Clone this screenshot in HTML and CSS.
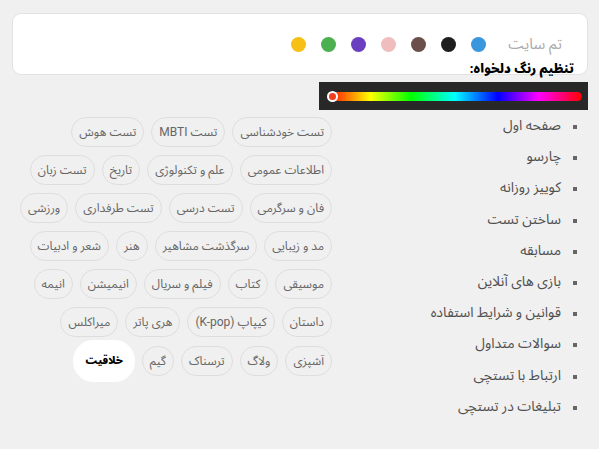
FILE: index.html
```html
<!DOCTYPE html>
<html lang="fa" dir="rtl">
<head>
    <meta charset="UTF-8">
    <meta name="viewport" content="width=device-width, initial-scale=1.0">
    <title>تنظیمات سایت</title>
    <link rel="stylesheet" href="styles.css">
</head>
<body>
    <div class="theme-card">
        <span class="theme-label">تم سایت</span>
        <span class="dot blue"></span>
        <span class="dot black"></span>
        <span class="dot brown"></span>
        <span class="dot pink"></span>
        <span class="dot purple"></span>
        <span class="dot green"></span>
        <span class="dot yellow"></span>
    </div>
    <h3 class="custom-title">تنظیم رنگ دلخواه:</h3>
    <div class="picker">
        <div class="hue-bar">
            <span class="thumb"></span>
        </div>
    </div>

    <div class="content">
        <ul class="menu">
            <li>صفحه اول</li>
            <li>چارسو</li>
            <li>کوییز روزانه</li>
            <li>ساختن تست</li>
            <li>مسابقه</li>
            <li>بازی های آنلاین</li>
            <li>قوانین و شرایط استفاده</li>
            <li>سوالات متداول</li>
            <li>ارتباط با تستچی</li>
            <li>تبلیغات در تستچی</li>
        </ul>
        <div class="tags">
            <div class="tag-row">
                <span class="tag">تست خودشناسی</span>
                <span class="tag">تست MBTI</span>
                <span class="tag">تست هوش</span>
            </div>
            <div class="tag-row">
                <span class="tag">اطلاعات عمومی</span>
                <span class="tag">علم و تکنولوژی</span>
                <span class="tag">تاریخ</span>
                <span class="tag">تست زبان</span>
            </div>
            <div class="tag-row">
                <span class="tag">فان و سرگرمی</span>
                <span class="tag">تست درسی</span>
                <span class="tag">تست طرفداری</span>
                <span class="tag">ورزشی</span>
            </div>
            <div class="tag-row">
                <span class="tag">مد و زیبایی</span>
                <span class="tag">سرگذشت مشاهیر</span>
                <span class="tag">هنر</span>
                <span class="tag">شعر و ادبیات</span>
            </div>
            <div class="tag-row">
                <span class="tag">موسیقی</span>
                <span class="tag">کتاب</span>
                <span class="tag">فیلم و سریال</span>
                <span class="tag">انیمیشن</span>
                <span class="tag">انیمه</span>
            </div>
            <div class="tag-row">
                <span class="tag">داستان</span>
                <span class="tag">کیپاپ (K-pop)</span>
                <span class="tag">هری پاتر</span>
                <span class="tag">میراکلس</span>
            </div>
            <div class="tag-row">
                <span class="tag">آشپزی</span>
                <span class="tag">ولاگ</span>
                <span class="tag">ترسناک</span>
                <span class="tag">گیم</span>
                <span class="tag active">خلاقیت</span>
            </div>
        </div>
    </div>
</body>
</html>
```

FILE: styles.css
```css
body {
    margin: 0;
    background-color: #F0F0F0;
    font-family: "Roboto", "Noto Sans Arabic", sans-serif;
    color: #555555;
}

.theme-card {
    display: flex;
    align-items: center;
    gap: 15px;
    height: 60px;
    margin: 13px 11px 0 12px;
    padding: 0 25px 0 0;
    background-color: #FFFFFF;
    border: 1px solid #E2E2E2;
    border-radius: 9px;
}

.theme-label {
    font-size: 15px;
    line-height: 20px;
    color: #ABABAB;
    margin-left: 7px;
}

.dot {
    width: 15px;
    height: 15px;
    border-radius: 50%;
}

.dot.blue { background-color: #3A96DD; }
.dot.black { background-color: #1E1E1E; }
.dot.brown { background-color: #6B4F4B; }
.dot.pink { background-color: #F0BDBF; }
.dot.purple { background-color: #6A3FBF; }
.dot.green { background-color: #4CAF50; }
.dot.yellow { background-color: #F6C014; }

.custom-title {
    margin: -15px 25px 0 0;
    font-size: 12.5px;
    font-weight: 900;
    color: #000000;
    line-height: 18px;
    position: relative;
}

.picker {
    width: 269px;
    height: 28px;
    margin: 4px 11px 0 0;
    background-color: #282828;
    display: flex;
    align-items: center;
    padding: 0 6px 0 8px;
    box-sizing: border-box;
}

.hue-bar {
    flex: 1;
    height: 9px;
    border-radius: 5px;
    position: relative;
    background: linear-gradient(to right, #FF0000, #FFFF00 17%, #00FF00 33%, #00FFFF 50%, #0000FF 67%, #FF00FF 83%, #FF0000);
}

.thumb {
    position: absolute;
    left: 0;
    top: -1px;
    width: 7px;
    height: 7px;
    border-radius: 50%;
    border: 2px solid #FFFFFF;
    background-color: #F23C1E;
}

.content {
    display: flex;
    align-items: flex-start;
}

.menu {
    width: 231px;
    margin: 0;
    padding: 0 36px 0 0;
    list-style: square;
    font-size: 14px;
    line-height: 31.2px;
    color: #505050;
    flex-shrink: 0;
}

.menu li {
    padding-right: 2px;
}

.menu li::marker {
    color: #666666;
    font-size: 12px;
}

.tags {
    margin-top: 7px;
    display: flex;
    flex-direction: column;
    gap: 8px;
}

.tag-row {
    display: flex;
    gap: 7px;
    align-items: center;
}

.tag {
    height: 28px;
    line-height: 28px;
    padding: 0 7px;
    border: 1px solid #DEDEDE;
    border-radius: 15px;
    font-size: 12px;
    color: #666666;
    white-space: nowrap;
}

.tag.active {
    height: 40px;
    line-height: 40px;
    margin: -5px 0;
    padding: 0 11px;
    background-color: #FFFFFF;
    border-color: #FFFFFF;
    border-radius: 20px;
    color: #000000;
    font-weight: 900;
    font-size: 10.5px;
}
```
